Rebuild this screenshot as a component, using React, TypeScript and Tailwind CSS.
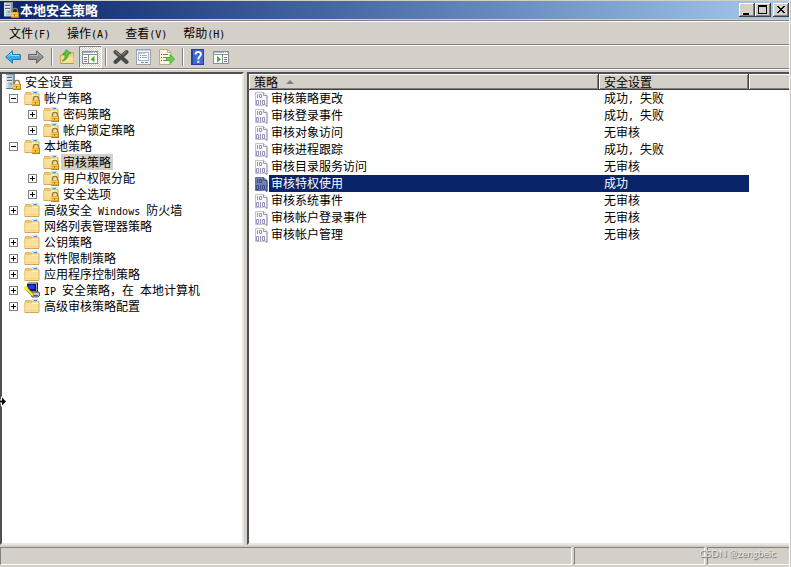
import { useState } from "react";
import type { ReactNode } from "react";

type IconName = "folder" | "locked" | "ipsec";

interface TreeItem {
  id: string;
  label: string;
  icon: IconName;
  expandable?: boolean;
  children?: TreeItem[];
}

interface Policy {
  name: string;
  setting: string;
}

const TREE: TreeItem[] = [
  {
    id: "account",
    label: "帐户策略",
    icon: "locked",
    expandable: true,
    children: [
      { id: "password", label: "密码策略", icon: "locked", expandable: true },
      { id: "lockout", label: "帐户锁定策略", icon: "locked", expandable: true },
    ],
  },
  {
    id: "local",
    label: "本地策略",
    icon: "locked",
    expandable: true,
    children: [
      { id: "audit", label: "审核策略", icon: "locked" },
      { id: "rights", label: "用户权限分配", icon: "locked", expandable: true },
      { id: "options", label: "安全选项", icon: "locked", expandable: true },
    ],
  },
  { id: "firewall", label: "高级安全 Windows 防火墙", icon: "folder", expandable: true },
  { id: "network", label: "网络列表管理器策略", icon: "folder" },
  { id: "pubkey", label: "公钥策略", icon: "folder", expandable: true },
  { id: "software", label: "软件限制策略", icon: "folder", expandable: true },
  { id: "appcontrol", label: "应用程序控制策略", icon: "folder", expandable: true },
  { id: "ipsec", label: "IP 安全策略，在 本地计算机", icon: "ipsec", expandable: true },
  { id: "advaudit", label: "高级审核策略配置", icon: "folder", expandable: true },
];

const POLICIES: Policy[] = [
  { name: "审核策略更改", setting: "成功, 失败" },
  { name: "审核登录事件", setting: "成功, 失败" },
  { name: "审核对象访问", setting: "无审核" },
  { name: "审核进程跟踪", setting: "成功, 失败" },
  { name: "审核目录服务访问", setting: "无审核" },
  { name: "审核特权使用", setting: "成功" },
  { name: "审核系统事件", setting: "无审核" },
  { name: "审核帐户登录事件", setting: "无审核" },
  { name: "审核帐户管理", setting: "无审核" },
];

const MENUS = ["文件(F)", "操作(A)", "查看(V)", "帮助(H)"];

// Latin runs are half the width of a Chinese character
function Label({ text }: { text: string }) {
  return (
    <>
      {text.split(/([\x20-\x7e]+)/).map((part, i) =>
        i % 2 ? (
          <span key={i} className="whitespace-pre font-['DejaVu_Sans_Mono',monospace] text-[10px]">
            {part}
          </span>
        ) : (
          part
        )
      )}
    </>
  );
}

function Svg({ children }: { children: ReactNode }) {
  return (
    <svg viewBox="0 0 16 16" className="block size-4 shrink-0" aria-hidden="true">
      {children}
    </svg>
  );
}

function Lock() {
  return (
    <>
      <path d="M9.5 11V8.8a2.500 2.500 0 0 1 5 0V11" fill="none" stroke="#94793c" strokeWidth="1.3" />
      <rect x="8" y="10" width="8" height="6" fill="#b9821a" />
      <rect x="8" y="10" width="7" height="5" fill="#e3ab2f" />
      <path d="M8 11.5h7M8 13.5h7" stroke="#f6cf5c" />
      <path d="M11.5 12v2" stroke="#a8750f" />
    </>
  );
}

function ServerIcon() {
  return (
    <Svg>
      <path d="M7 0h3v13H7z" fill="#8395a5" />
      <path d="M1 0h7v14H1z" fill="#bccad6" />
      <path d="M1 0h2v14H1z" fill="#d6e0e8" />
      <path d="M1 0.5h9" stroke="#8295a6" />
      <path d="M2 3.5h5M2 6.5h5" stroke="#4f6478" />
      <path d="M2 4.5h5M2 7.5h5" stroke="#eaf0f4" />
      <rect x="5" y="9" width="2" height="2" fill="#6fbf68" />
      <path d="M1 14.5h9" stroke="#66788a" />
      <Lock />
    </Svg>
  );
}

function FolderShape() {
  return (
    <>
      <path d="M1.5 14V2.5h5l1.5 1h7V14z" fill="#efcd78" stroke="#d8b565" />
      <path d="M8 1.5h6v3H8z" fill="#fffdf2" stroke="#dcc07c" strokeWidth="0.6" />
      <path d="M9.5 2.5h3.5" stroke="#3f94e0" />
      <path d="M0.7 4.5h7l1-1h6v11H0.7z" fill="#fae09a" stroke="#e6c577" />
      <path d="M8 5.5h6" stroke="#fff2c6" />
      <path d="M1.2 12.5h13" stroke="#f5d587" />
      <path d="M1 14.5h14" stroke="#cfa757" />
    </>
  );
}

function TreeIcon({ name }: { name: IconName }) {
  if (name === "ipsec") {
    return (
      <Svg>
        <path d="M3 1l2-1h9v9l-2 2H4z" fill="#a0a0a0" />
        <path d="M13.5 1v8l-1.5 2" stroke="#202020" fill="none" />
        <path d="M3 2h9v7H3z" fill="#101070" />
        <path d="M4.5 3h6v4h-6z" fill="#1040f0" />
        <path d="M6 10h9l1 3-2 2H8z" fill="#c4c4c4" stroke="#303030" strokeWidth="0.8" />
        <path d="M8 13.5h6" stroke="#606060" />
        <path d="M1.5 5.5 9 13.5" stroke="#8c7b00" strokeWidth="3.2" />
        <path d="M1.5 5.5 9 13.5" stroke="#ffe92c" strokeWidth="2" />
        <circle cx="2" cy="6" r="2" fill="#ffe92c" />
      </Svg>
    );
  }
  return (
    <Svg>
      <FolderShape />
      {name === "locked" && <Lock />}
    </Svg>
  );
}

function PolicyIcon({ selected }: { selected: boolean }) {
  const paper = selected ? "#7383ae" : "#f8f8fa";
  const edge = selected ? "#5f70a2" : "#c4c4c8";
  const shade = selected ? "#3d5088" : "#9c9ca2";
  const ink = selected ? "#3a4b86" : "#9292ba";
  return (
    <Svg>
      <path d="M2.5 1.5h8l3.500 3v11l-2.500-1.500-2 .5H2.500z" fill={paper} stroke={edge} />
      <path d="M10.500 1.500v3h3.500v11l-2.500-2" fill="none" stroke={shade} />
      <path d="M4.500 3v4M7.500 9v5" stroke={ink} />
      <path d="M6.500 3.500h2v3h-2zM3.500 9.500h2v4h-2zM9.500 9.500h2v4h-2z" fill="none" stroke={ink} />
    </Svg>
  );
}

function ArrowIcon({ back }: { back?: boolean }) {
  return back ? (
    <Svg>
      <path d="M0.7 8 7.5 1.8v3.7h7.8v5H7.5v3.7z" fill="#35aeea" stroke="#1877b4" />
      <path d="M2.5 7.7 6.5 4v2.5h7.8" fill="none" stroke="#9ce0fb" />
    </Svg>
  ) : (
    <Svg>
      <path d="M15.3 8 8.5 1.8v3.7H0.7v5h7.8v3.7z" fill="#919191" stroke="#5d5d5d" />
      <path d="M1.7 6.5h7.8V4l4 3.7" fill="none" stroke="#b8b8b8" />
    </Svg>
  );
}

function UpFolderIcon() {
  return (
    <Svg>
      <path d="M1.5 14.5V6h6l1.5-2.5h5.5v11z" fill="#efcf75" stroke="#cda84f" />
      <path d="M2 7.5h12.5v7H2z" fill="#f8df96" />
      <path d="M1.5 14.5h13" stroke="#bd9440" />
      <path
        d="M3 12C5.5 10.5 6.5 8 6.3 5.2L3.5 5.5 7.5 0.8l4.5 3.7-2.8.3C9.5 8.5 7 11.5 3 12z"
        fill="#52c83c"
        stroke="#2f9424"
        strokeWidth="0.7"
      />
    </Svg>
  );
}

function PaneIcon({ side }: { side: "left" | "right" }) {
  return (
    <Svg>
      <g shapeRendering="crispEdges">
        <rect x="0.5" y="2.5" width="15" height="12" fill="#fff" stroke="#8490a0" />
        <path d="M1 3.5h14" stroke="#a4b0be" />
        <path d="M11 3.5h1M13 3.5h1" stroke="#fff" />
        <path d="M1 5.5h14" stroke="#8490a0" />
        {side === "left" ? (
          <>
            <path d="M6.5 6v8" stroke="#8490a0" />
            <path d="M2 8.5h3M2 10.5h3M2 12.5h3" stroke="#4b83c4" />
          </>
        ) : (
          <>
            <path d="M9.5 6v8" stroke="#8490a0" />
            <path d="M11 8.5h3M11 10.5h3M11 12.5h3" stroke="#4b83c4" />
          </>
        )}
      </g>
      {side === "left" ? (
        <path d="M12.5 7v6.5L8.5 10.2z" fill="#3fb32f" />
      ) : (
        <path d="M4 7v6.5l4-3.3z" fill="#3fb32f" />
      )}
    </Svg>
  );
}

function DeleteIcon() {
  return (
    <Svg>
      <path
        d="M2.5 3 13.5 13M13.5 3 2.5 13"
        stroke="#484848"
        strokeWidth="4"
        strokeLinecap="round"
      />
      <path d="M2.5 2.5 7.5 7M13 2.5 9.5 6" stroke="#7d7d7d" strokeWidth="1.2" />
    </Svg>
  );
}

function PropertiesIcon() {
  return (
    <Svg>
      <g shapeRendering="crispEdges">
        <rect x="0.5" y="0.5" width="14" height="15" fill="#f4f6f8" stroke="#98a2ae" />
        <path d="M1 1.5h13" stroke="#c9d2dc" />
        <rect x="2.5" y="3.5" width="10" height="8" fill="#fff" stroke="#a9b4c0" />
        <path d="M3 4.5h3M7 4.5h2" stroke="#c0cad4" />
        <path d="M4 6.5h1M4 8.5h1" stroke="#3f8bd0" />
        <path d="M6 6.5h5M6 8.5h5" stroke="#a3adb9" />
        <path d="M5 13.5h3M9 13.5h3" stroke="#36a8df" />
      </g>
    </Svg>
  );
}

function ExportIcon() {
  return (
    <Svg>
      <path d="M0.5 0.5h8l3.5 3v12H0.5z" fill="#fdf8dc" stroke="#b5ae8a" />
      <path d="M8.5 0.5v3h3.5" fill="none" stroke="#b5ae8a" />
      <g shapeRendering="crispEdges">
        <path d="M2 5.5h1M2 8.5h1M2 11.5h1" stroke="#4a5a80" />
        <path d="M4 5.5h5M4 8.5h4M4 11.5h4" stroke="#7c7c88" />
      </g>
      <path d="M7.5 8.5h3.5v-3L15.7 10 11 14.5v-3H7.5z" fill="#6bd044" stroke="#3fa02e" strokeWidth="0.8" />
    </Svg>
  );
}

function HelpIcon() {
  return (
    <Svg>
      <rect x="1.5" y="0.5" width="12" height="15" fill="#4169d4" stroke="#263f98" />
      <path d="M2.5 1v14" stroke="#2444a4" />
      <path
        d="M5.5 5.5c0-3.5 5.4-3.4 5.4-.3C10.9 7.5 8.3 7.5 8.3 10.5"
        fill="none"
        stroke="#fff"
        strokeWidth="1.9"
      />
      <rect x="7.3" y="11.8" width="2" height="2" fill="#fff" />
    </Svg>
  );
}

function ToolButton({ label, pressed, children }: { label: string; pressed?: boolean; children: ReactNode }) {
  return (
    <button
      type="button"
      aria-label={label}
      aria-pressed={pressed}
      className={`flex h-[22px] w-[23px] items-center border pl-0.5 ${
        pressed
          ? "border-[#808080] border-r-white border-b-white bg-[repeating-conic-gradient(#ffffff_0_25%,#d4d0c8_0_50%)] bg-size-[2px_2px]"
          : "border-transparent"
      }`}
    >
      {children}
    </button>
  );
}

function Separator() {
  return <div className="mx-[3px] h-[18px] w-0.5 border-l border-[#808080] bg-white" />;
}

function CaptionButton({ label, children }: { label: string; children: ReactNode }) {
  return (
    <button
      type="button"
      aria-label={label}
      className="flex h-3.5 w-4 items-center justify-center bg-[#d4d0c8] shadow-[inset_-1px_-1px_0_#404040,inset_1px_1px_0_#fff,inset_-2px_-2px_0_#808080]"
    >
      <svg viewBox="0 0 12 10" className="block h-2.5 w-3" shapeRendering="crispEdges" aria-hidden="true">
        {children}
      </svg>
    </button>
  );
}

interface TreeNodeProps {
  item: TreeItem;
  open: string[];
  selected: string;
  onToggle: (id: string) => void;
  onSelect: (id: string) => void;
}

function TreeNode({ item, open, selected, onToggle, onSelect }: TreeNodeProps) {
  const expanded = open.includes(item.id);

  return (
    <li>
      <div className="flex h-4 items-center">
        <div className="w-[15px] shrink-0">
          {item.expandable && (
            <button
              type="button"
              aria-label={item.label}
              aria-expanded={expanded}
              onClick={() => onToggle(item.id)}
              className="block size-[9px] border border-[#808080] bg-white"
            >
              <svg viewBox="0 0 7 7" className="block size-[7px]" shapeRendering="crispEdges" aria-hidden="true">
                <path d={expanded ? "M1 3.5h5" : "M1 3.5h5M3.5 1v5"} stroke="#000" />
              </svg>
            </button>
          )}
        </div>
        <TreeIcon name={item.icon} />
        <button
          type="button"
          onClick={() => onSelect(item.id)}
          className={`ml-0.5 h-4 px-0.5 whitespace-nowrap ${selected === item.id ? "bg-[#d4d0c8]" : ""}`}
        >
          <Label text={item.label} />
        </button>
      </div>
      {item.children && expanded && (
        <ul className="pl-[19px]">
          {item.children.map((child) => (
            <TreeNode
              key={child.id}
              item={child}
              open={open}
              selected={selected}
              onToggle={onToggle}
              onSelect={onSelect}
            />
          ))}
        </ul>
      )}
    </li>
  );
}

export default function App() {
  const [open, setOpen] = useState<string[]>(["account", "local"]);
  const [node, setNode] = useState("audit");
  const [row, setRow] = useState(5);

  const toggle = (id: string) => {
    setOpen((prev) => (prev.includes(id) ? prev.filter((x) => x !== id) : [...prev, id]));
  };

  const headCell =
    "h-4 bg-[#d4d0c8] p-0 pl-[5px] text-left font-normal shadow-[inset_-1px_-1px_0_#404040,inset_1px_1px_0_#fff,inset_-2px_-2px_0_#808080]";
  const pane =
    "border-2 border-t-[#505050] border-l-[#505050] border-r-[#e9e7e3] border-b-[#e9e7e3] bg-white overflow-auto";

  return (
    <div className="relative min-h-screen border-r border-[#c8c8c8] bg-white pr-px font-['Noto_Sans_CJK_SC',sans-serif] text-[12px] leading-4 text-black">
      <div className="flex min-h-screen flex-col bg-[#d4d0c8]">
        <header className="mt-px flex h-[18px] items-center bg-linear-to-r from-[#0a246a] to-[#a6caf0] pl-[3px]">
          <ServerIcon />
          <h1 className="flex-1 pl-px text-[13px] font-bold text-white">本地安全策略</h1>
          <CaptionButton label="最小化">
            <path d="M2 8h6v2H2z" />
          </CaptionButton>
          <CaptionButton label="最大化">
            <path d="M1 0h9v9H1zM2 2v6h7V2z" fillRule="evenodd" />
          </CaptionButton>
          <div className="w-0.5" />
          <CaptionButton label="关闭">
            <path d="M2 1h2v1h1v1h2V2h1V1h2v1H9v1H8v1H7v1h1v1h1v1h1v1H8V7H7V6H5v1H4v1H2V7h1V6h1V5h1V4H4V3H3V2H2z" />
          </CaptionButton>
        </header>

        <nav className="mt-px flex h-[25px] items-center border-t border-b border-t-[#808080] border-b-[#808080] pt-0.5 pl-px shadow-[inset_0_1px_0_#fff]">
          {MENUS.map((menu) => (
            <button key={menu} type="button" className="px-2 whitespace-nowrap">
              <Label text={menu} />
            </button>
          ))}
        </nav>

        <div className="flex h-6 items-center border-t border-b border-t-white border-b-[#808080] pl-0.5">
          <ToolButton label="后退">
            <ArrowIcon back />
          </ToolButton>
          <ToolButton label="前进">
            <ArrowIcon />
          </ToolButton>
          <Separator />
          <ToolButton label="上一级">
            <UpFolderIcon />
          </ToolButton>
          <ToolButton label="显示/隐藏控制台树" pressed>
            <PaneIcon side="left" />
          </ToolButton>
          <Separator />
          <ToolButton label="删除">
            <DeleteIcon />
          </ToolButton>
          <ToolButton label="属性">
            <PropertiesIcon />
          </ToolButton>
          <ToolButton label="导出列表">
            <ExportIcon />
          </ToolButton>
          <Separator />
          <ToolButton label="帮助">
            <HelpIcon />
          </ToolButton>
          <ToolButton label="显示/隐藏操作窗格">
            <PaneIcon side="right" />
          </ToolButton>
        </div>

        <main className="flex flex-1 gap-[3px] border-t border-white pt-0.5">
          <aside className={`w-[244px] shrink-0 ${pane}`}>
            <div className="flex h-4 items-center pl-[3px]">
              <ServerIcon />
              <button type="button" onClick={() => setNode("root")} className="ml-0.5 h-4 px-0.5">
                安全设置
              </button>
            </div>
            <ul className="pl-[7px]">
              {TREE.map((item) => (
                <TreeNode
                  key={item.id}
                  item={item}
                  open={open}
                  selected={node}
                  onToggle={toggle}
                  onSelect={setNode}
                />
              ))}
            </ul>
          </aside>

          <section className={`min-w-0 flex-1 border-r-0 ${pane}`}>
            <table className="w-full table-fixed border-collapse">
              <colgroup>
                <col className="w-[350px]" />
                <col className="w-[150px]" />
                <col />
              </colgroup>
              <thead>
                <tr>
                  <th className={headCell}>
                    <span className="flex items-center gap-2">
                      策略
                      <svg viewBox="0 0 8 4" className="h-1 w-2" aria-hidden="true">
                        <path d="M0 4 4 0l4 4z" fill="#808080" />
                      </svg>
                    </span>
                  </th>
                  <th className={headCell}>安全设置</th>
                  <td className="bg-[#d4d0c8] p-0 shadow-[inset_0_-1px_0_#404040,inset_1px_1px_0_#fff,inset_0_-2px_0_#808080]" />
                </tr>
              </thead>
              <tbody>
                {POLICIES.map((policy, i) => (
                  <tr key={policy.name} onClick={() => setRow(i)} className={i === row ? "text-white" : ""}>
                    <td className="p-0">
                      <div className="flex h-[17px] items-center pl-1">
                        <PolicyIcon selected={i === row} />
                        <span className={`h-[17px] flex-1 pl-0.5 ${i === row ? "bg-[#0a246a]" : ""}`}>
                          {policy.name}
                        </span>
                      </div>
                    </td>
                    <td className="p-0">
                      <div className={`h-[17px] pl-[5px] ${i === row ? "bg-[#0a246a]" : ""}`}>
                        <Label text={policy.setting} />
                      </div>
                    </td>
                    <td className="p-0" />
                  </tr>
                ))}
              </tbody>
            </table>
          </section>
        </main>

        <footer className="flex h-[22px] gap-0.5 pt-0.5 pb-0.5">
          <div className="flex-1 border border-[#808080] border-r-white border-b-white" />
          <div className="w-[131px] border border-[#808080] border-r-white border-b-white" />
          <div className="w-[82px] border border-r-0 border-[#808080] border-b-white" />
        </footer>
      </div>

      <svg viewBox="0 0 7 11" className="absolute top-[396px] left-0 h-[11px] w-[7px]" aria-hidden="true">
        <path d="M0 3.5h1V0L7 5.5 1 11V7.5H0z" fill="#fff" />
        <path d="M0 4.5h2V1.5L6 5.5 2 9.5V6.5H0z" />
      </svg>
      <span className="absolute right-3.5 bottom-2 font-['Lato',sans-serif] text-[10px] leading-3 whitespace-nowrap text-[#e6e4e0] [text-shadow:1px_1px_1px_#606060]">
        CSDN @zengbeic
      </span>
    </div>
  );
}
